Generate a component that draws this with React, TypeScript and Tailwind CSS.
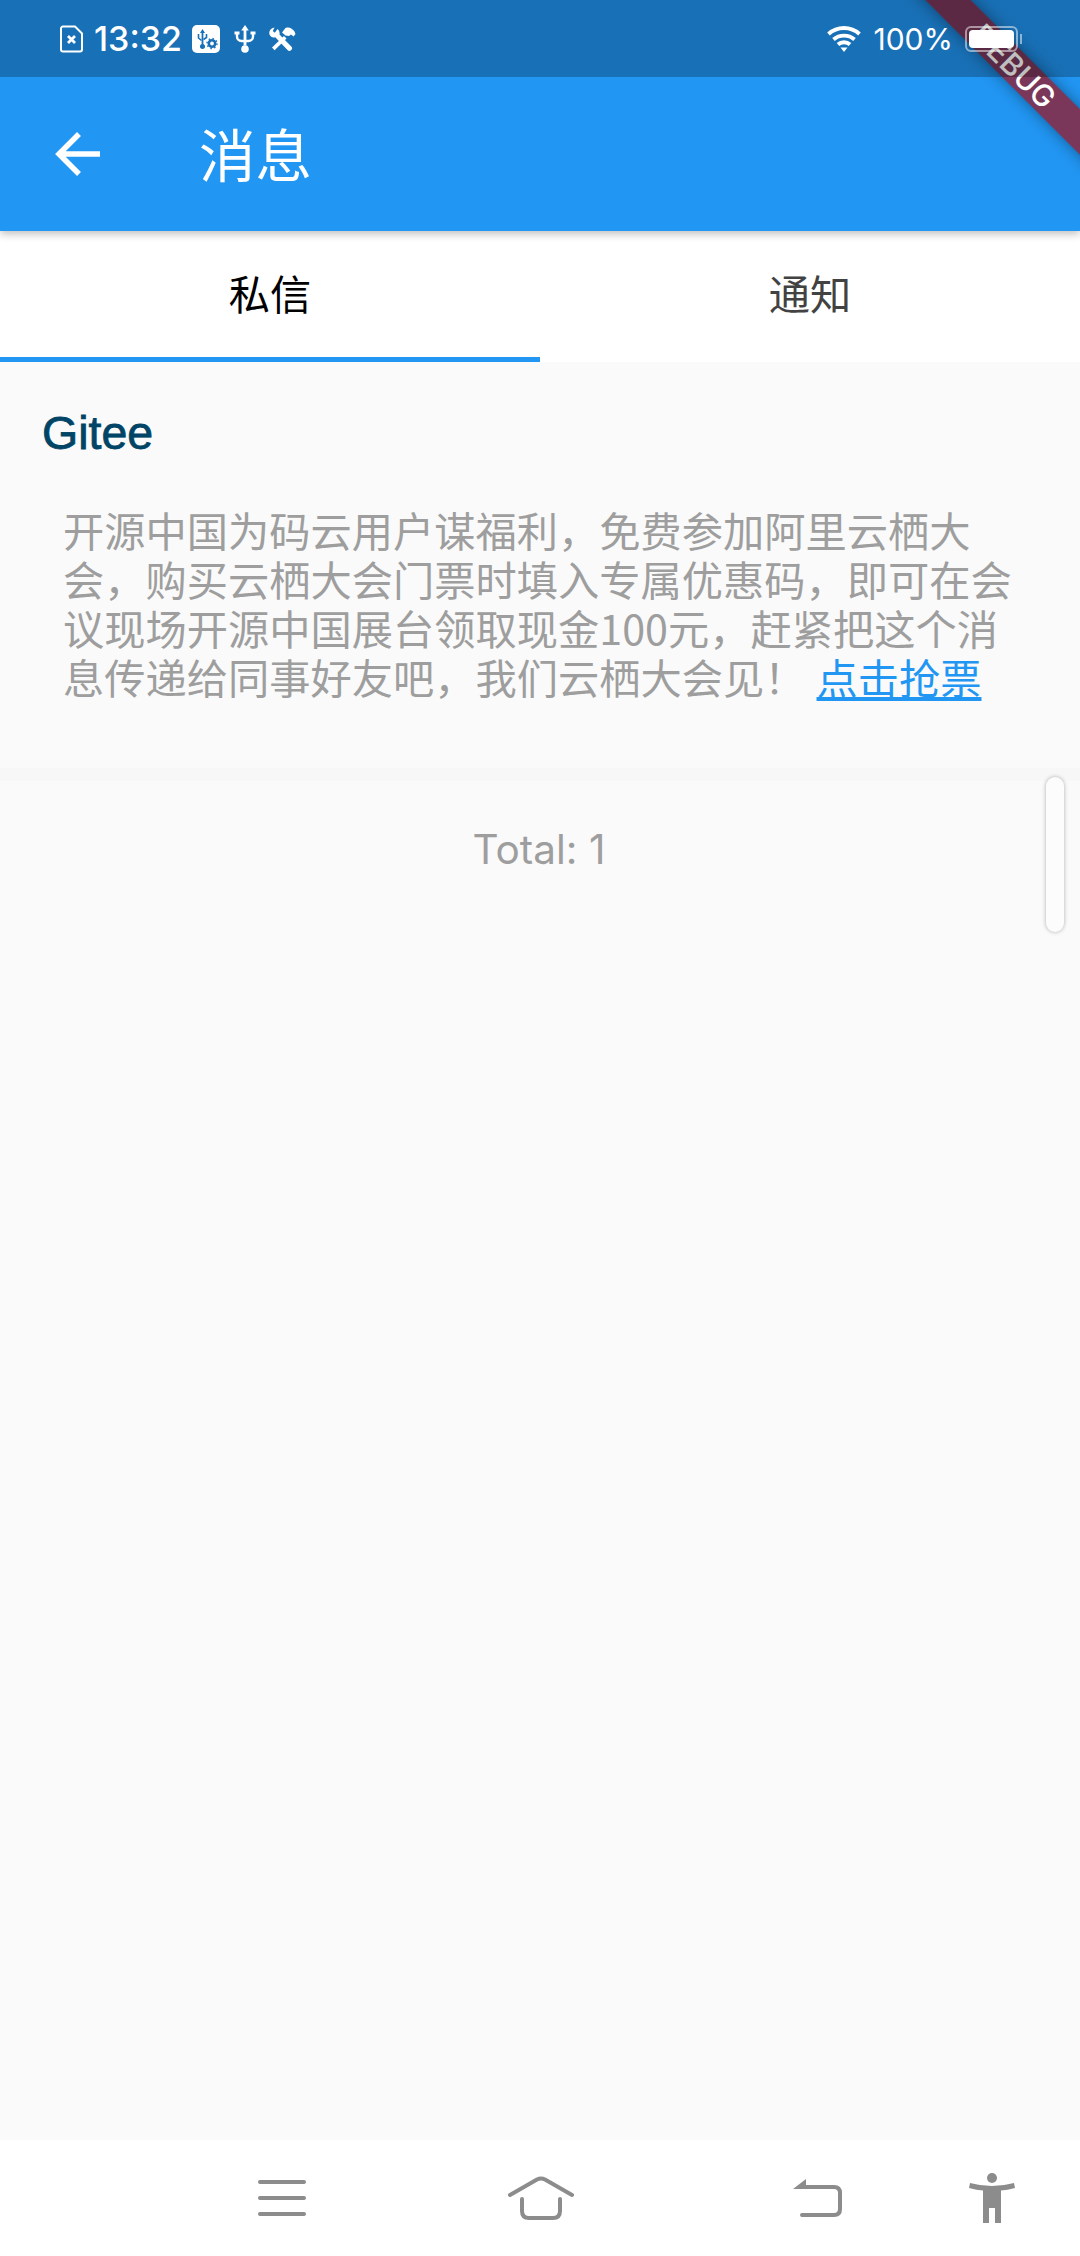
const cjk = "font-['Noto_Sans_CJK_SC','Liberation_Sans',sans-serif]";

const message =
  "开源中国为码云用户谋福利\uFF0C免费参加阿里云栖大会\uFF0C购买云栖大会门票时填入专属优惠码\uFF0C即可在会议现场开源中国展台领取现金100元\uFF0C赶紧把这个消息传递给同事好友吧\uFF0C我们云栖大会见\uFF01";

const SimIcon = () => (
  <svg width="24" height="28" viewBox="0 0 24 28" fill="none" stroke="white" strokeWidth="2">
    <path d="M3 1.500h12l7 7v16a2 2 0 0 1-2 2H3a2 2 0 0 1-2-2v-21a2 2 0 0 1 2-2z" />
    <path d="M8 11l7 7M15 11l-7 7" strokeWidth="2.800" />
  </svg>
);

const UsbSettingsIcon = () => (
  <svg width="28" height="28" viewBox="0 0 28 28">
    <rect width="28" height="28" rx="5" fill="white" />
    <path d="M10.500 4l2.500 4h-1.600v11a2.600 2.600 0 1 1-1.800 0V8H8z" fill="#1A70B8" />
    <path d="M6.500 9v4l3 2.500M14.500 9v3.500l-3 2" fill="none" stroke="#1A70B8" strokeWidth="1.600" />
    <circle cx="20" cy="18.500" r="3.200" fill="none" stroke="#1A70B8" strokeWidth="2.600" />
    <circle cx="20" cy="18.500" r="5" fill="none" stroke="#1A70B8" strokeWidth="1.400" strokeDasharray="1.500 2.400" />
  </svg>
);

const UsbIcon = () => (
  <svg width="22" height="28" viewBox="0 0 22 28" fill="white">
    <path d="M11 0l3.800 5.500h-2.400v15h-2.800v-15H7.200z" />
    <circle cx="11" cy="24" r="3.800" />
    <path d="M3 8v3.500a4.500 4.500 0 0 0 4.500 4.500H11M19 8v3.500a4.500 4.500 0 0 1-4.500 4.500H11" fill="none" stroke="white" strokeWidth="2.400" />
    <rect x="0.500" y="6.500" width="5" height="3" />
    <rect x="16.500" y="6.500" width="5" height="3" />
  </svg>
);

const ToolsIcon = () => (
  <svg width="28" height="26" viewBox="0 0 28 26" fill="white">
    <path d="M6.500 1.500a5.500 5.500 0 0 0-5 7 5 5 0 0 0 5.800 2.800L19.500 24a2.500 2.500 0 0 0 3.800-3.600L11.500 8.500A5.500 5.500 0 0 0 9.500 3L6.800 6.800 4.800 5z" />
    <path d="M4 21.500l2.600 2.700L18.500 12.500 16 10z" />
    <path d="M14 6.500l3.500-4.500c3.500-1.500 7 .5 9 3.500l1 2.500-2 2.500-2.500-2-2 1.500-3.500-.5z" />
  </svg>
);

const WifiIcon = () => (
  <svg width="34" height="27" viewBox="0 0 34 27" fill="none" stroke="white" strokeWidth="3.800">
    <path d="M1.500 9c8.700-8 22.300-8 31 0" />
    <path d="M6.500 14.500c5.800-5.300 15.200-5.300 21 0" />
    <path d="M11 19.500c3.200-3 8.800-3 12 0" />
    <path d="M13.500 22.500h7L17 27z" fill="white" stroke="none" />
  </svg>
);

const MenuIcon = () => (
  <svg width="48" height="38" viewBox="0 0 48 38" fill="none" stroke="#8C8C8C" strokeWidth="4" strokeLinecap="round">
    <path d="M2 3h44M2 19h44M2 35h44" />
  </svg>
);

const HomeIcon = () => (
  <svg width="66" height="44" viewBox="0 0 66 44" fill="none" stroke="#8C8C8C" strokeWidth="4" strokeLinecap="round" strokeLinejoin="round">
    <path d="M2 19L29 3.500q4-2 8 0L64 19" />
    <path d="M14 23v12q0 7 7 7h24q7 0 7-7V23" />
  </svg>
);

const BackIcon = () => (
  <svg width="50" height="40" viewBox="0 0 50 40" fill="#8C8C8C">
    <path d="M14 1v10H1z" />
    <path d="M10 9h32q6 0 6 6v16q0 6-6 6H10" fill="none" stroke="#8C8C8C" strokeWidth="4" strokeLinecap="round" />
  </svg>
);

const PersonIcon = () => (
  <svg width="46" height="50" viewBox="0 0 46 50" fill="#8C8C8C">
    <circle cx="23" cy="5" r="5" />
    <path d="M1 10q11 3 22 3t22-3l1 5q-8 2-14 2.500V50h-6V35h-6v15h-6V17.500Q8 17 0 15z" />
  </svg>
);

export default function App() {
  return (
    <div className={`relative flex h-[2256px] w-[1080px] flex-col overflow-hidden bg-[#FAFAFA] ${cjk}`}>
      <div className="relative bg-[#2196F3] shadow-[0_3px_8px_rgba(0,0,0,0.25)]">
        {/* status bar sits over the debug banner and darkens it */}
        <div className="relative z-30 flex h-[77px] items-center justify-between bg-black/25 pl-[60px] pr-[62px] text-white">
          <div className="flex items-center">
            <SimIcon />
            <span className="ml-[10px] font-['Inter',sans-serif] text-[34px] font-medium leading-none">13:32</span>
            <span className="ml-[10px] flex"><UsbSettingsIcon /></span>
            <span className="ml-[14px] flex"><UsbIcon /></span>
            <span className="ml-[12px] flex"><ToolsIcon /></span>
          </div>
          <div className="flex items-center">
            <WifiIcon />
            <span className="ml-[12px] font-['Inter',sans-serif] text-[30px] leading-none">100%</span>
            <div className="relative ml-[12px] flex h-[26px] w-[53px] items-center rounded-[6px] border-2 border-white/50 p-[2px]">
              <div className="h-full w-full rounded-[4px] bg-white" />
              <div className="absolute right-[-6px] top-[6px] h-[10px] w-[2px] bg-white/50" />
            </div>
          </div>
        </div>

        {/* app bar */}
        <div className="flex h-[154px] items-center pl-[55px]">
          <svg width="45" height="44" viewBox="0 0 45 44" fill="none" stroke="white" strokeWidth="5.500">
            <path d="M45 22H4M24 2L4 22l20 20" />
          </svg>
          <h1 className="ml-[99px] pb-[3px] text-[56.500px] font-normal leading-none text-white">消息</h1>
        </div>
      </div>

      {/* tabs */}
      <div className="flex h-[131px] bg-white">
        <div className="flex w-1/2 items-center justify-center border-b-[5px] border-[#2196F3] pb-[2px] text-[41.250px] text-black">私信</div>
        <div className="flex w-1/2 items-center justify-center pb-[7px] text-[41.250px] text-[#424242]">通知</div>
      </div>

      {/* list */}
      <div className="relative flex-1">
        <div className="h-[419px] border-b-[13px] border-[#F7F7F7] pl-[42px] pt-[46px]">
          <div className="font-['Liberation_Sans',sans-serif] text-[46.500px] leading-[50px] text-[#004466] [-webkit-text-stroke:0.8px_#004466]">Gitee</div>
          <p className="ml-[21px] mt-[47px] w-[950px] text-[41.250px] leading-[49px] text-[#9E9E9E]">
            {message}
            <a href="#" className="ml-[11px] text-[#2196F3] underline">点击抢票</a>
          </p>
        </div>
        <div className="pr-[2px] pt-[44px] text-center font-['Inter',sans-serif] text-[40.500px] leading-[50px] text-[#9E9E9E]">Total: 1</div>
        <div className="absolute right-[16px] top-[415px] h-[155px] w-[18px] rounded-full bg-[#FCFCFC] shadow-[0_0_4px_rgba(0,0,0,0.3)]" />
      </div>

      {/* system nav */}
      <div className="relative flex h-[116px] items-center bg-white">
        <span className="ml-[258px] flex"><MenuIcon /></span>
        <span className="ml-[202px] flex"><HomeIcon /></span>
        <span className="ml-[218px] flex"><BackIcon /></span>
        <span className="ml-[127px] flex"><PersonIcon /></span>
      </div>

      {/* debug banner */}
      <div className="pointer-events-none absolute right-[-76px] top-[42px] z-20 flex h-[32px] w-[300px] rotate-45 items-center justify-center bg-[#AF0000]/[0.63] pl-[23px] font-['Inter',sans-serif] text-[30px] font-medium leading-none text-white shadow-[0_0_16px_rgba(0,0,0,0.4)]">
        DEBUG
      </div>
    </div>
  );
}
